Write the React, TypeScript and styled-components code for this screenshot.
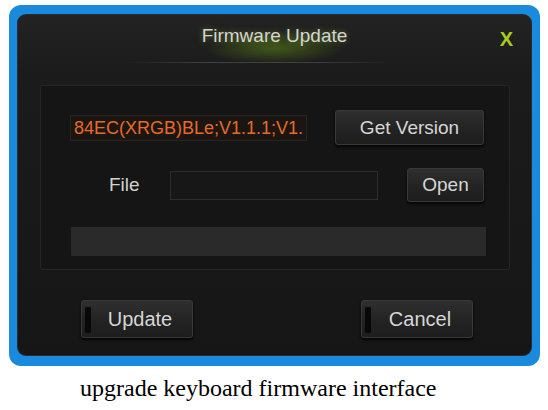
import styled, { createGlobalStyle } from 'styled-components';

const GlobalStyle = createGlobalStyle`
	html, body {
		margin: 0;
		padding: 0;
		background: #ffffff;
	}
	body {
		font-family: "Liberation Sans", Arial, sans-serif;
	}
`;

const Page = styled.div`
	width: 548px;
	height: 410px;
	padding: 5px 0 0 9px;
	box-sizing: border-box;
	overflow: hidden;
`;

const Frame = styled.div`
	width: 531px;
	height: 361px;
	box-sizing: border-box;
	background: #1a8bdc;
	border-radius: 12px;
	padding: 9px 8px 10px 8px;
`;

const Dialog = styled.div`
	height: 100%;
	display: flex;
	flex-direction: column;
	border-radius: 9px;
	background:
		radial-gradient(ellipse 70px 16px at 50% 34px, rgba(120, 175, 20, 0.4), rgba(120, 175, 20, 0) 100%),
		linear-gradient(#232323, #1b1b1b 60px, #161616);
	box-shadow: inset 0 0 0 1px #2b2b2b;
`;

const TitleBar = styled.div`
	position: relative;
	height: 49px;
	box-sizing: border-box;
	padding-bottom: 6px;
	display: flex;
	align-items: center;
	justify-content: center;
	&::after {
		content: '';
		position: absolute;
		left: 110px;
		right: 140px;
		bottom: 0;
		height: 1px;
		background: linear-gradient(90deg, rgba(70, 70, 70, 0), #404040 30%, #404040 70%, rgba(70, 70, 70, 0));
	}
`;

const Title = styled.div`
	color: #d4d4d4;
	font-size: 19px;
	text-shadow: 0 0 6px rgba(150, 200, 40, 0.5);
`;

const Close = styled.div`
	position: absolute;
	right: 19px;
	top: 14px;
	color: #a8cc1e;
	font-size: 20px;
	font-weight: bold;
`;

const Panel = styled.div`
	margin: 22px 22px 0 23px;
	height: 185px;
	box-sizing: border-box;
	background: #151515;
	border: 1px solid #262626;
	border-radius: 3px;
	padding: 24px 25px 0 29px;
	display: flex;
	flex-direction: column;
`;

const Row = styled.div<{ $gap: number; $top?: number }>`
	display: flex;
	align-items: center;
	gap: ${p => p.$gap}px;
	margin-top: ${p => p.$top ?? 0}px;
`;

const VersionBox = styled.div`
	width: 237px;
	height: 26px;
	box-sizing: border-box;
	background: #1b1612;
	border: 1px solid #2a2420;
	color: #e86a24;
	font-size: 18px;
	line-height: 24px;
	white-space: nowrap;
	overflow: hidden;
	padding-left: 3px;
`;

const Button = styled.div<{ $w: number; $h: number }>`
	width: ${p => p.$w}px;
	height: ${p => p.$h}px;
	box-sizing: border-box;
	display: flex;
	align-items: center;
	justify-content: center;
	color: #d6d6d6;
	font-size: 19px;
	background: linear-gradient(#2f2f2f, #232323 55%, #1d1d1d);
	border: 1px solid #383838;
	border-radius: 3px;
	box-shadow: 0 2px 3px rgba(0, 0, 0, 0.8);
`;

const Label = styled.div`
	width: 100px;
	box-sizing: border-box;
	padding-left: 39px;
	color: #d2d2d2;
	font-size: 19px;
`;

const FileBox = styled.div`
	width: 208px;
	height: 29px;
	box-sizing: border-box;
	background: #171717;
	border: 1px solid #2c2c2c;
	margin-right: 29px;
`;

const Progress = styled.div`
	width: 415px;
	height: 29px;
	margin-top: 25px;
	margin-left: 1px;
	background: #2a2a2a;
	border-radius: 1px;
`;

const Footer = styled.div`
	display: flex;
	justify-content: space-between;
	padding: 0 59px 0 64px;
	margin-top: 30px;
`;

const ActionButton = styled(Button)`
	position: relative;
	padding-left: 6px;
	font-size: 20px;
	&::before {
		content: '';
		position: absolute;
		left: 3px;
		top: 6px;
		bottom: 4px;
		width: 6px;
		background: #080808;
		border-radius: 1px;
	}
`;

const Caption = styled.div`
	font-family: "Liberation Serif", "Times New Roman", serif;
	font-size: 24px;
	color: #000;
	padding-left: 71px;
	margin-top: 9px;
`;

export default function App() {
	return (
		<>
			<GlobalStyle />
			<Page>
				<Frame>
					<Dialog>
						<TitleBar>
							<Title>Firmware Update</Title>
							<Close>X</Close>
						</TitleBar>
						<Panel>
							<Row $gap={28}>
								<VersionBox>84EC(XRGB)BLe;V1.1.1;V1.</VersionBox>
								<Button $w={149} $h={35}>Get Version</Button>
							</Row>
							<Row $gap={0} $top={23}>
								<Label>File</Label>
								<FileBox />
								<Button $w={77} $h={34}>Open</Button>
							</Row>
							<Progress />
						</Panel>
						<Footer>
							<ActionButton $w={112} $h={38}>Update</ActionButton>
							<ActionButton $w={112} $h={38}>Cancel</ActionButton>
						</Footer>
					</Dialog>
				</Frame>
				<Caption>upgrade keyboard firmware interface</Caption>
			</Page>
		</>
	);
}
